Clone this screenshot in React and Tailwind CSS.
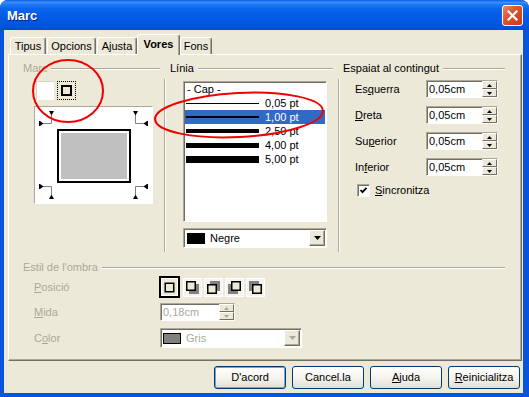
import React from "react";

function HLine() {
  return <div className="flex-1 h-[2px] border-t border-t-[#ACA899] border-b border-b-white" />;
}

function Header({ label, disabled }) {
  return (
    <div className="flex items-center h-[13px] gap-[4px]">
      <span className={disabled ? "text-[#ACA899]" : "text-black"}>{label}</span>
      <HLine />
    </div>
  );
}

function SpinHalf({ up, disabled }) {
  const c = disabled ? "#ACA899" : "#000";
  return (
    <div className="flex-1 flex items-center justify-center bg-[#ECE9D8] border border-t-white border-l-white border-r-[#716F64] border-b-[#716F64]">
      <svg width="5" height="3" viewBox="0 0 5 3">
        {up ? <polygon points="2.5,0 5,3 0,3" fill={c} /> : <polygon points="0,0 5,0 2.5,3" fill={c} />}
      </svg>
    </div>
  );
}

function Field({ value, wide, disabled }) {
  return (
    <div
      className={`flex h-[18px] ${wide ? "w-[75px]" : "w-[72px]"} bg-white border border-t-[#ACA899] border-l-[#ACA899] border-r-white border-b-white shadow-[inset_1px_1px_0_#716F64]`}
    >
      <div className={`flex-1 pl-[2px] flex items-center ${disabled ? "text-[#ACA899]" : "text-black"}`}>{value}</div>
      <div className="flex flex-col w-[15px]">
        <SpinHalf up disabled={disabled} />
        <SpinHalf disabled={disabled} />
      </div>
    </div>
  );
}

function Combo({ label, swatch, disabled, narrow }) {
  return (
    <div
      className={`flex items-center h-[20px] ${narrow ? "w-[142px]" : "w-[144px]"} bg-white border border-t-[#ACA899] border-l-[#ACA899] border-r-white border-b-white shadow-[inset_1px_1px_0_#716F64]`}
    >
      <div className={`${disabled ? "ml-[2px]" : "ml-[3px]"} w-[18px] h-[11px] border border-black ${swatch}`} />
      <span className={`ml-[5px] ${disabled ? "text-[#ACA899]" : "text-black"}`}>{label}</span>
      <div className="ml-auto mr-[1px] w-[16px] h-[16px] flex items-center justify-center bg-[#ECE9D8] border border-t-white border-l-white border-r-[#716F64] border-b-[#716F64] shadow-[inset_-1px_-1px_0_#ACA899]">
        <svg width="7" height="4" viewBox="0 0 7 4">
          <polygon points="0,0 7,0 3.5,4" fill={disabled ? "#ACA899" : "#000"} />
        </svg>
      </div>
    </div>
  );
}

function ShadowIcon({ sx, sy, gx, gy }) {
  return (
    <svg width="15" height="15" viewBox="0 0 15 15">
      {gx !== undefined && <rect x={gx} y={gy} width="10" height="10" fill="#808080" />}
      <rect x={sx + 0.75} y={sy + 0.75} width="8.5" height="8.5" fill="#ECE9D8" stroke="#000" strokeWidth="1.5" />
    </svg>
  );
}

function Tab({ label, w, selected }) {
  return (
    <div
      className={`${w} flex items-center justify-center bg-[#ECE9D8] border-t border-l border-white border-r border-r-[#716F64] rounded-t-[3px] shadow-[inset_-1px_0_0_#ACA899] ${
        selected ? "h-[21px] -mb-[1px] relative z-10 font-bold pb-[2px]" : "h-[17px]"
      }`}
    >
      {label}
    </div>
  );
}

function Btn({ children, def }) {
  return (
    <div
      className={`w-[72px] h-[23px] flex items-center justify-center rounded-[3px] border border-[#003C74] bg-[linear-gradient(to_bottom,#FFFFFF,#F3F2EC_55%,#E2DED3)] ${
        def ? "shadow-[inset_0_0_0_1px_#7E9ED8]" : ""
      }`}
    >
      {children}
    </div>
  );
}

function Corner() {
  return (
    <svg width="117" height="96" viewBox="0 0 117 96" className="block">
      <g stroke="#808080" strokeWidth="1" fill="none">
        <path d="M16.5 8 V16.5 H8" />
        <path d="M100.5 8 V16.5 H109" />
        <path d="M16.5 88 V79.5 H8" />
        <path d="M100.5 88 V79.5 H109" />
      </g>
      <g fill="#000">
        <polygon points="14,4 19,4 16.5,8.5" />
        <polygon points="98,4 103,4 100.5,8.5" />
        <polygon points="14,92 19,92 16.5,87.5" />
        <polygon points="98,92 103,92 100.5,87.5" />
        <rect x="4" y="14" width="1" height="5" />
        <polygon points="5,14 5,19 8.5,16.5" />
        <rect x="112" y="14" width="1" height="5" />
        <polygon points="112,14 112,19 108.5,16.5" />
        <rect x="4" y="77" width="1" height="5" />
        <polygon points="5,77 5,82 8.5,79.5" />
        <rect x="112" y="77" width="1" height="5" />
        <polygon points="112,77 112,82 108.5,79.5" />
      </g>
      <rect x="23" y="23" width="72" height="52" fill="#fff" stroke="#000" strokeWidth="2" />
      <rect x="26" y="26" width="66" height="46" fill="#C0C0C0" />
    </svg>
  );
}

const lines = [
  { label: "0,05 pt", h: "h-[1px]" },
  { label: "1,00 pt", h: "h-[2px]", sel: true },
  { label: "2,50 pt", h: "h-[4px]" },
  { label: "4,00 pt", h: "h-[5px]" },
  { label: "5,00 pt", h: "h-[7px]" },
];

export default function App() {
  return (
    <div className="relative w-[529px] h-[397px] overflow-hidden rounded-t-[8px] bg-[#0855DD] flex flex-col font-['Liberation_Sans',Arial,sans-serif] text-[11px] text-black leading-[13px]">
      {/* title bar */}
      <div className="h-[30px] flex items-center pl-[7px] pr-[6px] bg-[linear-gradient(to_bottom,#0A5FEA_0%,#3D8EF7_8%,#1F7CF5_14%,#0B66EE_28%,#045DE6_50%,#0257E2_75%,#0053DD_90%,#0049C9_100%)]">
        <span className="text-white font-bold text-[13px] [text-shadow:1px_1px_0_#0A1E7A]">Marc</span>
        <div className="ml-auto w-[21px] h-[21px] rounded-[3px] border border-white bg-[linear-gradient(135deg,#EE8A6A,#E0532F_40%,#C63A18)] flex items-center justify-center">
          <svg width="11" height="11" viewBox="0 0 11 11">
            <path d="M1.5 1.5 L9.5 9.5 M9.5 1.5 L1.5 9.5" stroke="#fff" strokeWidth="2.2" strokeLinecap="square" />
          </svg>
        </div>
      </div>

      {/* body */}
      <div className="flex-1 ml-[4px] mr-[6px] mb-[4px] bg-[#ECE9D8] flex flex-col">
        {/* tabs */}
        <div className="mt-[4px] h-[20px] pl-[6px] flex items-end">
          <Tab label="Tipus" w="w-[36px] mr-[1px]" />
          <Tab label="Opcions" w="w-[49px] mr-[1px]" />
          <Tab label="Ajusta" w="w-[40px]" />
          <Tab label="Vores" w="w-[43px]" selected />
          <Tab label="Fons" w="w-[32px]" />
        </div>

        {/* panel */}
        <div className="ml-[4px] w-[514px] h-[307px] border border-t-white border-l-white border-r-[#716F64] border-b-[#716F64] shadow-[inset_-1px_-1px_0_#ACA899] flex flex-col">
          <div className="flex items-start">
            {/* Marc */}
            <div className="ml-[14px] w-[137px] mt-[7px] flex flex-col">
              <Header label="Marc" disabled />
              <div className="mt-[6px] ml-[13px] flex gap-[3px]">
                <div className="w-[18px] h-[19px] bg-white border-t border-l border-[#D8D5C8]" />
                <div className="w-[19px] h-[19px] border border-dotted border-black flex items-center justify-center">
                  <div className="w-[11px] h-[11px] border-2 border-black bg-[#ECE9D8]" />
                </div>
              </div>
              <div className="mt-[6px] ml-[11px] w-[119px] h-[98px] bg-white border border-t-[#ACA899] border-l-[#ACA899] border-r-white border-b-white">
                <Corner />
              </div>
            </div>

            {/* Línia */}
            <div className="ml-[4px] w-[169px] mt-[7px] flex flex-col">
              <div className="pl-[6px]">
                <Header label="Línia" />
              </div>
              <div className="mt-[4px] h-[173px] border-l border-l-[#ACA899] shadow-[inset_1px_0_0_#fff] pl-[18px] flex flex-col">
                <div className="mt-[2px] w-[144px] h-[141px] bg-white border border-t-[#ACA899] border-l-[#ACA899] border-r-white border-b-white shadow-[inset_1px_1px_0_#716F64] pt-[1px] flex flex-col">
                  <div className="h-[13px] mx-[1px] pl-[2px] flex items-center">- Cap -</div>
                  {lines.map((l) => (
                    <div
                      key={l.label}
                      className={`h-[14px] mx-[1px] pl-[1px] flex items-center ${l.sel ? "bg-[#316AC5] text-white" : ""}`}
                    >
                      <div className={`w-[73px] ${l.h} bg-black`} />
                      <span className="ml-[6px]">{l.label}</span>
                    </div>
                  ))}
                </div>
                <div className="mt-[6px]">
                  <Combo label="Negre" swatch="bg-black" />
                </div>
              </div>
            </div>

            {/* Espaiat */}
            <div className="ml-[5px] w-[167px] mt-[7px] flex flex-col">
              <div className="pl-[5px]">
                <Header label="Espaiat al contingut" />
              </div>
              <div className="mt-[4px] h-[173px] border-l border-l-[#ACA899] shadow-[inset_1px_0_0_#fff] pt-[1px] flex flex-col gap-[8px]">
                {[
                  ["Es", "q", "uerra"],
                  ["", "D", "reta"],
                  ["Su", "p", "erior"],
                  ["In", "f", "erior"],
                ].map(([a, u, b]) => (
                  <div key={a + u + b} className="flex items-center h-[18px] pl-[16px]">
                    <span className="w-[71px]">
                      {a}
                      <span className="underline">{u}</span>
                      {b}
                    </span>
                    <Field value="0,05cm" />
                  </div>
                ))}
                <div className="flex items-center h-[13px] pl-[18px]">
                  <div className="w-[13px] h-[13px] bg-white border border-t-[#ACA899] border-l-[#ACA899] border-r-white border-b-white shadow-[inset_1px_1px_0_#716F64] flex items-center justify-center">
                    <svg width="9" height="9" viewBox="0 0 9 9">
                      <path d="M1.5 4 L3.5 6.2 L7.5 1.8" stroke="#000" strokeWidth="1.8" fill="none" />
                    </svg>
                  </div>
                  <span className="ml-[5px]">
                    <span className="underline">S</span>incronitza
                  </span>
                </div>
              </div>
            </div>
          </div>

          {/* shadow */}
          <div className="mt-[9px] ml-[14px] w-[482px]">
            <Header label="Estil de l'ombra" disabled />
          </div>
          <div className="mt-[2px] ml-[25px] h-[22px] flex items-center text-[#ACA899]">
            <span className="w-[126px]">
              <span className="underline">P</span>osició
            </span>
            <div className="-ml-[1px] flex items-center">
              <div className="w-[21px] h-[22px] border-2 border-black mr-[1px]">
                <div className="w-full h-full border border-white flex items-center justify-center">
                  <ShadowIcon sx={2.5} sy={2.5} />
                </div>
              </div>
              {[
                [1, 1, 4, 4],
                [1, 4, 4, 1],
                [4, 1, 1, 4],
                [4, 4, 1, 1],
              ].map(([sx, sy, gx, gy], i) => (
                <div key={i} className="w-[19px] h-[19px] ml-[2px] bg-[#F4F3EE] border border-white flex items-center justify-center">
                  <ShadowIcon sx={sx} sy={sy} gx={gx} gy={gy} />
                </div>
              ))}
            </div>
          </div>
          <div className="mt-[5px] ml-[25px] h-[18px] flex items-center text-[#ACA899]">
            <span className="w-[126px]">
              <span className="underline">M</span>ida
            </span>
            <Field value="0,18cm" wide disabled />
          </div>
          <div className="mt-[7px] ml-[25px] h-[20px] flex items-center text-[#ACA899]">
            <span className="w-[126px]">
              C<span className="underline">o</span>lor
            </span>
            <Combo label="Gris" swatch="bg-[#808080]" disabled narrow />
          </div>
        </div>

        {/* buttons */}
        <div className="mt-[5px] pr-[3px] flex justify-end gap-[6px]">
          <Btn def>D'acord</Btn>
          <Btn>Cancel.la</Btn>
          <Btn>
            <span>
              <span className="underline">A</span>juda
            </span>
          </Btn>
          <Btn>
            <span>
              <span className="underline">R</span>einicialitza
            </span>
          </Btn>
        </div>
      </div>

      {/* red annotations */}
      <svg className="absolute left-0 top-0 pointer-events-none" width="529" height="397" viewBox="0 0 529 397">
        <ellipse cx="68" cy="91" rx="35" ry="31" fill="none" stroke="#F00000" strokeWidth="2" />
        <ellipse cx="239" cy="115" rx="84" ry="22" fill="none" stroke="#F00000" strokeWidth="2" transform="rotate(-3 239 115)" />
      </svg>
    </div>
  );
}
